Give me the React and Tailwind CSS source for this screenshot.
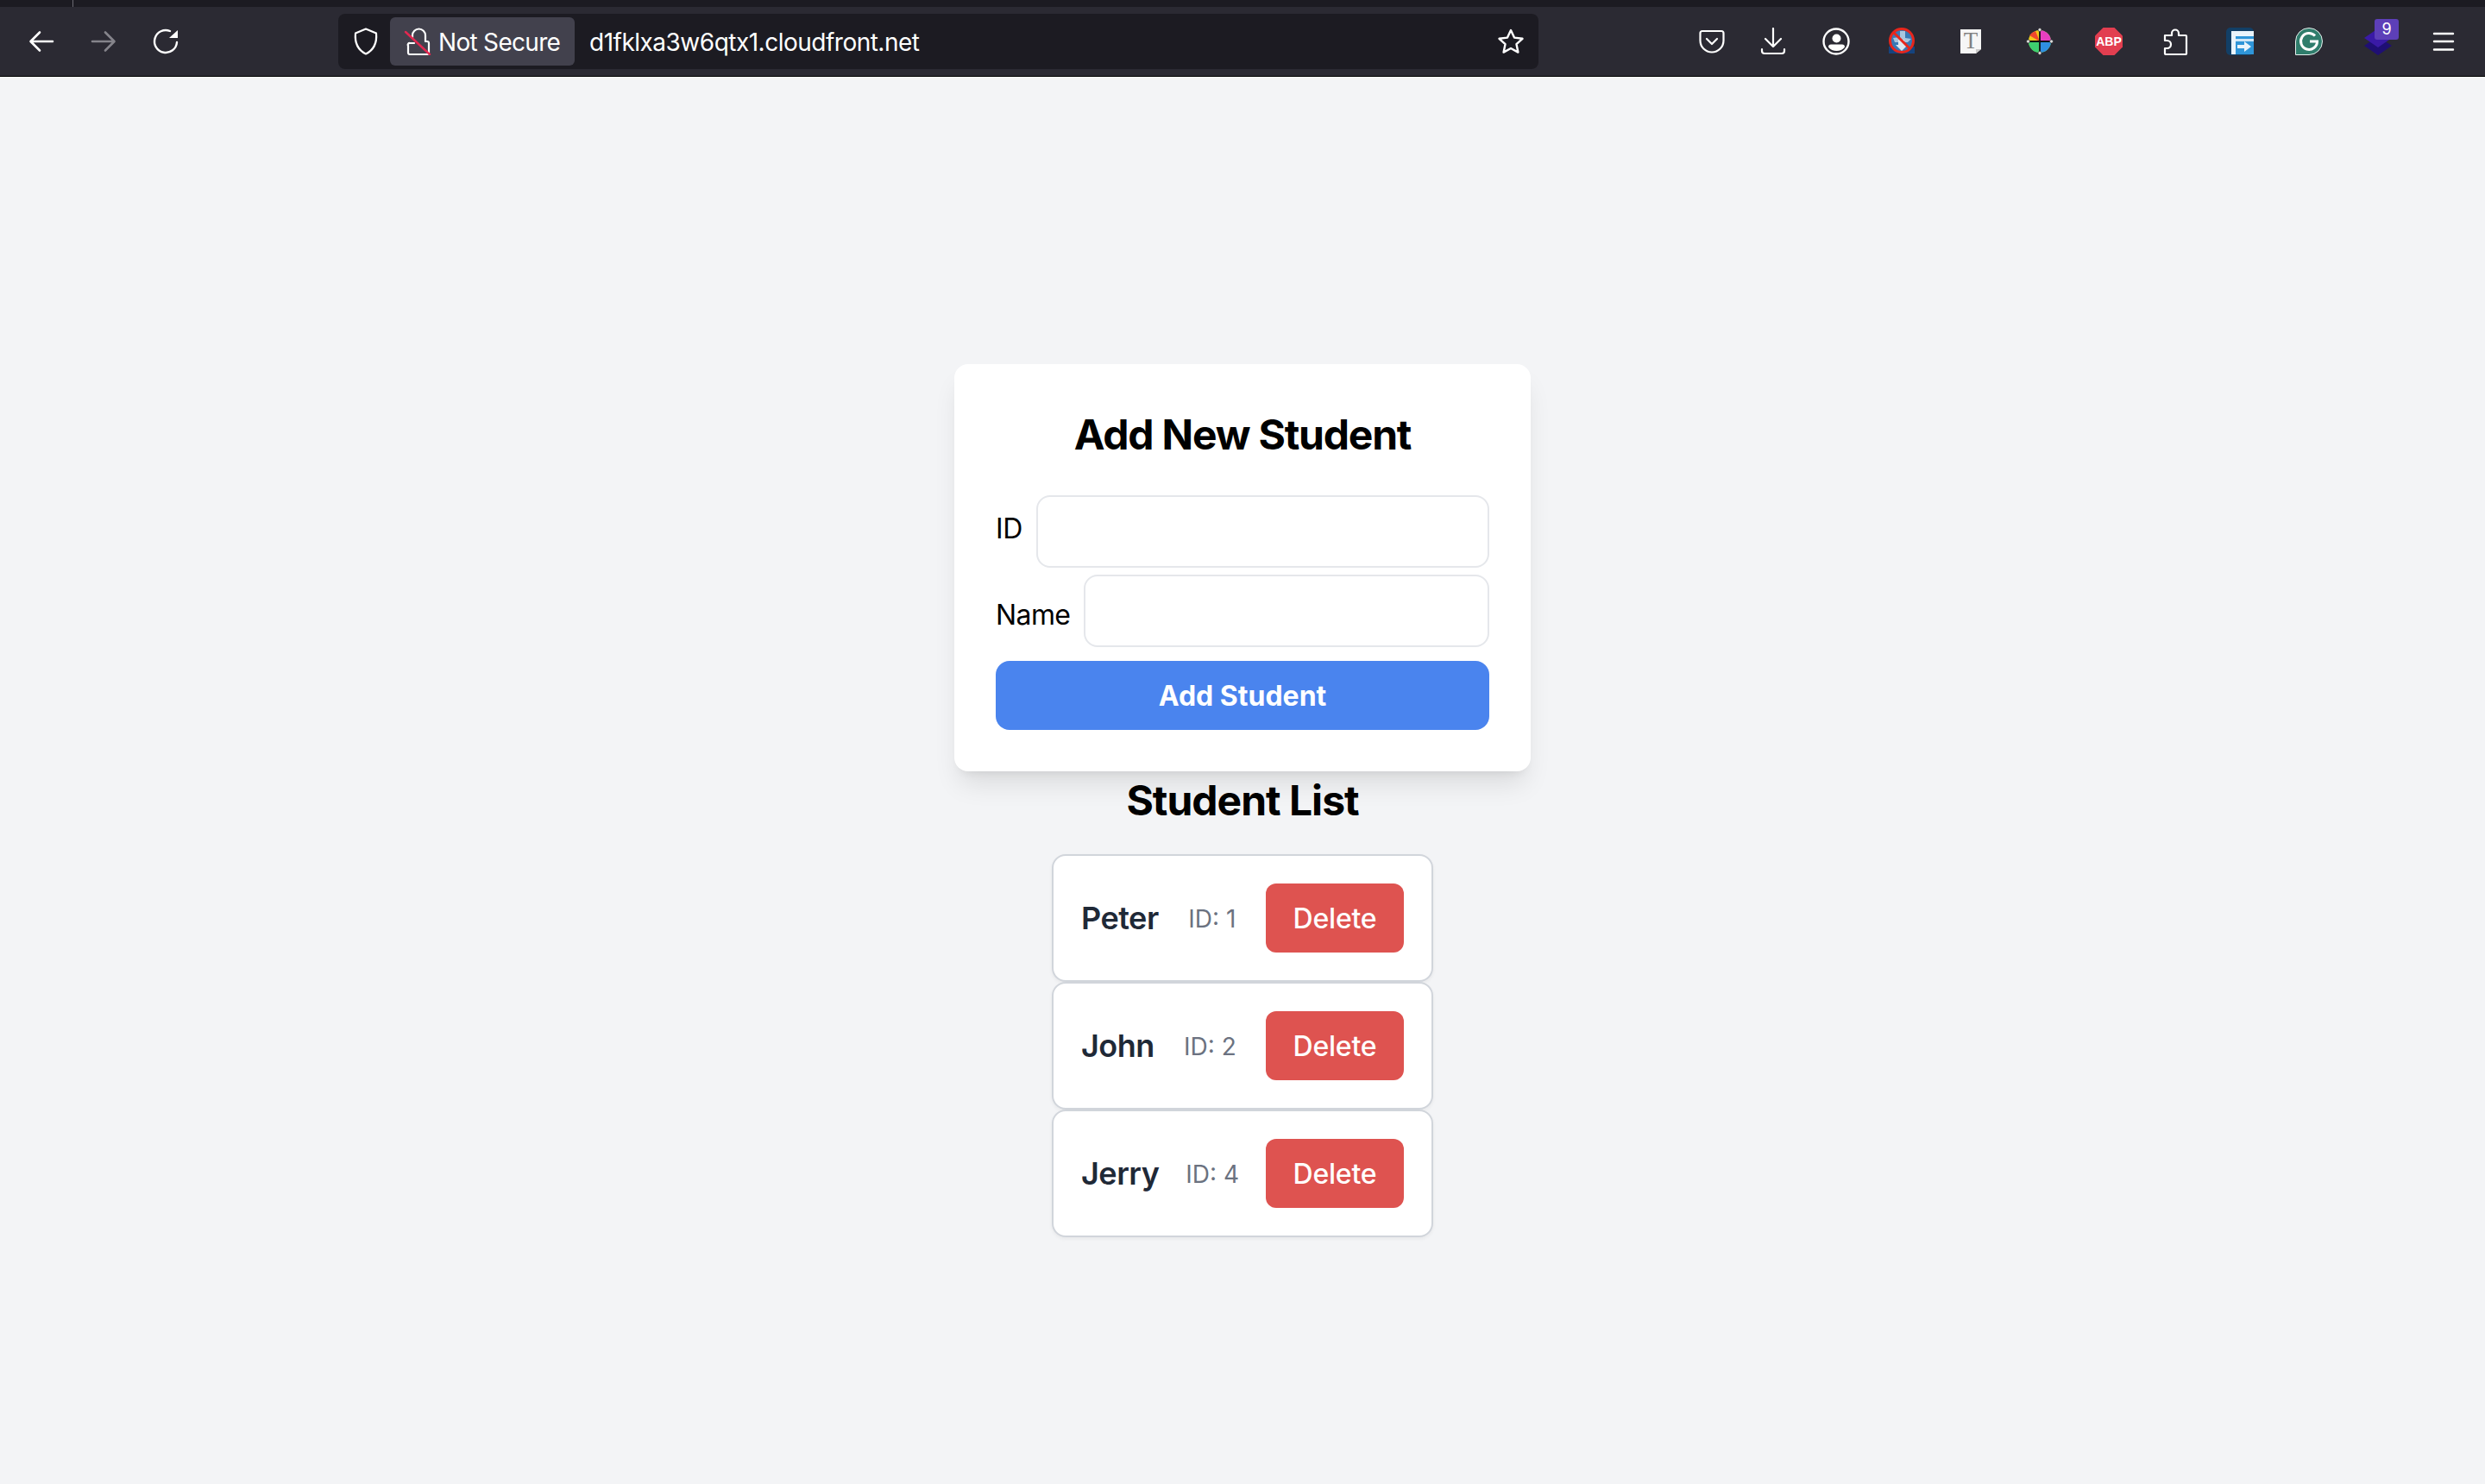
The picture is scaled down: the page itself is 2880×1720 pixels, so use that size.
const students = [
  { name: 'Peter', id: 1 },
  { name: 'John', id: 2 },
  { name: 'Jerry', id: 4 },
]

function NavIcons() {
  return (
    <div className="flex items-center">
      <svg className="ml-[32px] w-8 h-8 text-white" viewBox="0 0 32 32" fill="none" stroke="currentColor" strokeWidth="2.6" strokeLinecap="round" strokeLinejoin="round">
        <path d="M29 16H4M14 5.5L3.5 16 14 26.5" />
      </svg>
      <svg className="ml-[40px] w-8 h-8 text-[#85848b]" viewBox="0 0 32 32" fill="none" stroke="currentColor" strokeWidth="2.6" strokeLinecap="round" strokeLinejoin="round">
        <path d="M3 16h25M18 5.5L28.5 16 18 26.5" />
      </svg>
      <svg className="ml-[40px] w-8 h-8 text-white" viewBox="0 0 32 32" fill="none" stroke="currentColor" strokeWidth="2.4" strokeLinecap="round">
        <path d="M21 4A13 13 0 1 0 29 17" />
        <path d="M30 3v9H20z" fill="currentColor" stroke="none" />
      </svg>
    </div>
  )
}

function Shield() {
  return (
    <svg className="w-[30px] h-8" viewBox="0 0 30 32" fill="none" stroke="white" strokeWidth="2.2" strokeLinejoin="round">
      <path d="M15 1.5L27 6.5C28 17 24 26 15 30.5 6 26 2 17 3 6.5z" />
    </svg>
  )
}

function BrokenLock() {
  return (
    <svg className="w-8 h-8" viewBox="0 0 32 32" fill="none" strokeLinecap="round">
      <path d="M10 12V9a7.500 7.500 0 0 1 15 0v7M25 16h2a2 2 0 0 1 2 2v11a2 2 0 0 1-2 2H7a2 2 0 0 1-2-2v-8a2 2 0 0 1 2-3h5" stroke="white" strokeWidth="2.200" />
      <path d="M2 5l28 26" stroke="#e22850" strokeWidth="2.400" />
    </svg>
  )
}

function Star() {
  return (
    <svg className="w-8 h-8" viewBox="0 0 32 32" fill="none" stroke="white" strokeWidth="2.4" strokeLinejoin="round">
      <path d="M16 3l4 8.6 9.5 1.2-7 6.400 1.900 9.400L16 24l-8.400 4.600 1.900-9.400-7-6.400L12 11.600z" />
    </svg>
  )
}

function ToolbarIcons() {
  return (
    <div className="flex items-center pr-8">
      {/* pocket */}
      <svg className="w-8 h-8" viewBox="0 0 32 32" fill="none" stroke="white" strokeWidth="2.2" strokeLinecap="round" strokeLinejoin="round">
        <path d="M5 4h22a2.500 2.500 0 0 1 2.500 2.500V15a13.500 13.500 0 0 1-27 0V6.500A2.500 2.500 0 0 1 5 4z" />
        <path d="M10 13l6 6 6-6" />
      </svg>
      {/* download */}
      <svg className="ml-[39px] w-8 h-8" viewBox="0 0 32 32" fill="none" stroke="white" strokeWidth="2.2" strokeLinecap="round" strokeLinejoin="round">
        <path d="M16 1v21M7 13l9 9 9-9" />
        <path d="M3 25v2a3 3 0 0 0 3 3h20a3 3 0 0 0 3-3v-2" />
      </svg>
      {/* account */}
      <svg className="ml-[41px] w-8 h-8" viewBox="0 0 32 32">
        <circle cx="16" cy="16" r="14.500" fill="none" stroke="white" strokeWidth="2.400" />
        <circle cx="16.500" cy="12.500" r="5" fill="white" />
        <path d="M7 22.500a3 3 0 0 1 3-3h13a3 3 0 0 1 3 3c-2 3-6 4.500-9.500 4.500S9 25.500 7 22.500z" fill="white" />
      </svg>
      {/* blocked globe */}
      <svg className="ml-[44px] w-8 h-8" viewBox="0 0 32 32">
        <rect x="1" y="22" width="30" height="8" fill="#15437e" />
        <circle cx="16" cy="15" r="13" fill="#3a78b5" />
        <path d="M6 12l8-1V4h6v8l7 1-4 4H8z" fill="#a9c5de" />
        <path d="M12 14h7v6h4l-7 7-7-7h3z" fill="#dbe7f1" />
        <circle cx="16" cy="15" r="13.500" fill="none" stroke="#e8261c" strokeWidth="3" />
        <path d="M7 6l18 18" stroke="#e8261c" strokeWidth="3" />
      </svg>
      {/* font doc */}
      <svg className="ml-[48px] w-8 h-8" viewBox="0 0 32 32">
        <path d="M4 2h24v23l-6 5H4z" fill="#f6f6f6" />
        <path d="M22 30l6-5h-6z" fill="#c9c9c9" />
        <text x="16" y="24" textAnchor="middle" fontSize="27" fontFamily="'Liberation Serif', serif" fill="#808080">T</text>
      </svg>
      {/* colour wheel */}
      <svg className="ml-[48px] w-8 h-8" viewBox="0 0 32 32">
        <circle cx="16" cy="16" r="13" fill="#73d13d" />
        <path d="M16 16V3a13 13 0 0 1 13 13z" fill="#e83fc0" />
        <path d="M16 16V3A13 13 0 0 0 3 16z" fill="#f5c518" />
        <path d="M16 16H3a13 13 0 0 0 13 13z" fill="#3ecf6f" />
        <path d="M16 16h13a13 13 0 0 1-13 13z" fill="#2f8fe0" />
        <path d="M16 16L4 9a13 13 0 0 1 7-5z" fill="#f0462e" />
        <path d="M16 2v28M2 16h28" stroke="#111" strokeWidth="1.800" />
        <circle cx="16" cy="2.500" r="2" fill="#ddd" stroke="#222" strokeWidth="0.600" />
        <circle cx="16" cy="29.500" r="2" fill="#ddd" stroke="#222" strokeWidth="0.600" />
        <circle cx="2.500" cy="16" r="2" fill="#ddd" stroke="#222" strokeWidth="0.600" />
        <circle cx="29.500" cy="16" r="2" fill="#ddd" stroke="#222" strokeWidth="0.600" />
      </svg>
      {/* adblock */}
      <div className="ml-[48px] relative w-8 h-8">
        <svg className="w-8 h-8" viewBox="0 0 32 32">
          <path d="M9.500 0h13L32 9.500v13L22.500 32h-13L0 22.500v-13z" fill="#e23e50" />
        </svg>
        <span className="absolute inset-0 flex items-center justify-center font-['Liberation_Sans',sans-serif] text-[14px] font-bold text-white">ABP</span>
      </div>
      {/* puzzle */}
      <svg className="ml-[45px] w-8 h-8" viewBox="0 0 32 32" fill="none" stroke="white" strokeWidth="2.2" strokeLinejoin="round">
        <path d="M4 9h8V6.500a4 4 0 0 1 8 0V9h8a1 1 0 0 1 1 1v20a1 1 0 0 1-1 1H5a1 1 0 0 1-1-1v-6h2.500a4.500 4.500 0 0 0 0-9H4z" />
      </svg>
      {/* blue forward */}
      <svg className="ml-[43px] w-8 h-8" viewBox="0 0 32 32">
        <rect width="32" height="32" rx="5" fill="#123f66" />
        <path d="M6 4h26v6H11v21H6z" fill="#eaf4fb" />
        <rect x="11" y="10" width="21" height="21" fill="#2f95d8" />
        <rect x="11" y="13" width="21" height="3" fill="#cfe6f6" />
        <path d="M13 20h8v-4l8 6-8 6v-4h-8z" fill="#eaf4fb" />
      </svg>
      {/* grammarly */}
      <svg className="ml-[48px] w-8 h-8" viewBox="0 0 32 32">
        <path d="M16 0.500A15.500 15.500 0 1 1 16 31.500H0.500V16A15.500 15.500 0 0 1 16 0.500z" fill="#2f7d6c" stroke="#e6efed" strokeWidth="1" />
        <path d="M23 9.500A9.500 9.500 0 1 0 25.500 16H17" fill="none" stroke="white" strokeWidth="3" />
      </svg>
      {/* stacked layers with count */}
      <div className="ml-[48px] relative w-8 h-8">
        <svg className="w-8 h-8" viewBox="0 0 32 32">
          <path d="M16 10l16 11-16 11L0 21z" fill="#1f0f74" />
          <path d="M16 1l16 11-16 11L0 12z" fill="#3a1aa6" />
        </svg>
        <span className="absolute left-[12px] top-[-10px] w-[28px] h-6 rounded-[3px] bg-[#5d3fb8] flex items-center justify-center text-[18px] leading-none text-white">9</span>
      </div>
      {/* hamburger */}
      <svg className="ml-[44px] w-8 h-8" viewBox="0 0 32 32" stroke="white" strokeWidth="2.400" strokeLinecap="round">
        <path d="M5 7h22M5 16h22M5 25.500h22" />
      </svg>
    </div>
  )
}

function BrowserBar() {
  return (
    <div className="flex flex-col border-b border-black font-['Inter',sans-serif]">
      <div className="h-2 bg-[#1c1b22] flex">
        <div className="ml-[84px] w-[1px] h-2 bg-[#6b6a72]" />
      </div>
      <div className="h-[80px] bg-[#2b2a33] flex items-center justify-between">
        <div className="flex items-center">
          <NavIcons />
          <div className="ml-[184px] w-[1391px] h-[64px] rounded-[8px] bg-[#1c1b22] flex items-center">
            <div className="ml-[17px]"><Shield /></div>
            <div className="ml-[13px] h-[56px] w-[214px] rounded-[6px] bg-[#42414d] flex items-center pl-[16px]">
              <BrokenLock />
              <span className="ml-[8px] pt-[2px] text-[28px] leading-none text-white tracking-[-0.7px]">Not Secure</span>
            </div>
            <span className="ml-[17px] pt-[2px] text-[28px] leading-none text-white tracking-[-0.5px]">d1fklxa3w6qtx1.cloudfront.net</span>
            <div className="ml-auto mr-[16px]"><Star /></div>
          </div>
        </div>
        <ToolbarIcons />
      </div>
    </div>
  )
}

export default function App() {
  return (
    <div className="min-h-screen bg-[#f3f4f6] font-['Inter',sans-serif] text-black">
      <BrowserBar />
      <div className="flex flex-col items-center pt-[333px]">
        <form className="w-[668px] bg-white rounded-[16px] p-12 shadow-[0_20px_30px_-6px_rgba(0,0,0,0.1),0_8px_12px_-8px_rgba(0,0,0,0.1)]" onSubmit={e => e.preventDefault()}>
          <h2 className="text-[48px] leading-[64px] font-bold tracking-[-1.2px] text-center pt-[2px] mb-[38px]">Add New Student</h2>
          <div className="flex items-center gap-4 mb-2">
            <label className="text-[32px] leading-[48px] tracking-[-0.4px] mb-[6px]">ID</label>
            <input className="flex-1 min-w-0 h-[84px] rounded-[16px] border-2 border-[#e5e7eb] bg-white" />
          </div>
          <div className="flex items-center gap-4 mb-4">
            <label className="text-[32px] leading-[48px] tracking-[-0.6px] mt-[10px]">Name</label>
            <input className="flex-1 min-w-0 h-[84px] rounded-[16px] border-2 border-[#e5e7eb] bg-white" />
          </div>
          <button className="w-full h-[80px] pt-[2px] rounded-[16px] bg-[#4a84ee] text-white text-[32px] font-bold">Add Student</button>
        </form>

        <h2 className="text-[48px] leading-[64px] font-bold tracking-[-1px] text-center pt-[2px] mb-[30px]">Student List</h2>
        <div className="w-[442px] flex flex-col">
          {students.map(s => (
            <div key={s.id} className="flex items-center justify-between h-[148px] px-8 bg-white border-2 border-[#d1d5db] rounded-[16px] shadow-[0_2px_4px_rgba(0,0,0,0.05)]">
              <span className="text-[36px] font-semibold tracking-[-0.5px] text-[#1f2937]">{s.name}</span>
              <span className="pt-[2px] text-[28px] text-[#6b7280]">ID: {s.id}</span>
              <button className="w-[160px] h-[80px] pt-[2px] rounded-[12px] bg-[#de5350] text-white text-[32px] font-medium tracking-[-0.2px]">Delete</button>
            </div>
          ))}
        </div>
      </div>
    </div>
  )
}
